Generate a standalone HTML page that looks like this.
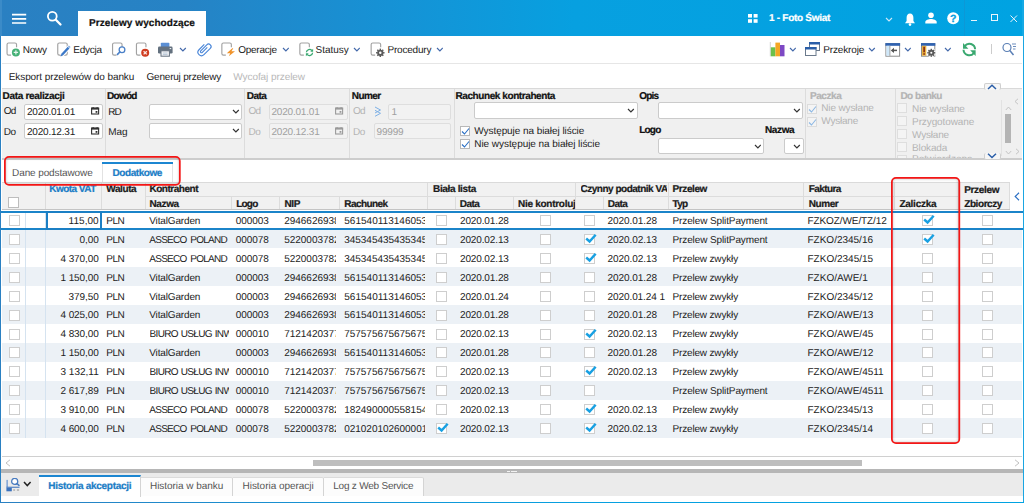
<!DOCTYPE html>
<html><head><meta charset="utf-8"><style>
*{box-sizing:border-box;margin:0;padding:0}
html,body{width:1024px;height:503px;overflow:hidden;background:#fff}
body{font-family:"Liberation Sans",sans-serif;font-size:10px;color:#222;position:relative;text-rendering:geometricPrecision}
.a{position:absolute}
.t{position:absolute;white-space:nowrap;line-height:12px}

</style></head><body>
<div class="a" style="left:0px;top:0px;width:1024px;height:36px;background:linear-gradient(90deg,#2a80c2 0%,#2683c5 18%,#1692d5 38%,#07a0e0 56%,#00a3e2 100%);"></div>
<div class="a" style="left:0px;top:0px;width:2px;height:36px;background:#3b8bc8;"></div>
<div class="a" style="left:1022px;top:0px;width:2px;height:36px;background:#14a9e4;"></div>
<div class="a" style="left:78px;top:11px;width:128px;height:25px;background:#fff;"></div>
<div class="t" style="left:89.00px;top:18px;font-size:10px;color:#111;letter-spacing:0.079px;font-weight:bold;-webkit-text-stroke:0.22px;">Przelewy wychodzące</div>
<svg class="a" style="left:11px;top:13px" width="17" height="12" viewBox="0 0 17 12"><path d="M1 1.7H15.2M1 5.8H15.2M1 10H15.2" stroke="#fff" stroke-width="1.7"/></svg>
<svg class="a" style="left:45.9px;top:9.9px" width="17" height="17" viewBox="0 0 17 17"><circle cx="6.3" cy="6.3" r="4.4" fill="none" stroke="#fff" stroke-width="1.8"/><path d="M9.8 9.8L14.5 14.5" stroke="#fff" stroke-width="2.3" stroke-linecap="round"/></svg>
<svg class="a" style="left:747.5px;top:14px" width="10" height="9" viewBox="0 0 10 9"><rect x="0" y="0" width="4" height="3.6" fill="#fff"/><rect x="5.6" y="0" width="4" height="3.6" fill="#fff"/><rect x="0" y="5.2" width="4" height="3.6" fill="#fff"/><rect x="5.6" y="5.2" width="4" height="3.6" fill="#fff"/></svg>
<div class="t" style="left:769.00px;top:13px;font-size:10px;color:#fff;letter-spacing:-0.286px;font-weight:bold;-webkit-text-stroke:0.22px;">1 - Foto Świat</div>
<svg class="a" style="left:885px;top:16.5px" width="8" height="5" viewBox="0 0 8 5"><path d="M1 1L4.0 4L7 1" fill="none" stroke="#cfe8f8" stroke-width="1.1"/></svg>
<svg class="a" style="left:904px;top:13px" width="12" height="14" viewBox="0 0 12 14"><path d="M6 0.5C3.8 0.5 2.6 2.4 2.6 4.8V8L1 10.2H11L9.4 8V4.8C9.4 2.4 8.2 0.5 6 0.5Z" fill="#fff"/><circle cx="6" cy="11.6" r="1.3" fill="#fff"/></svg>
<svg class="a" style="left:925px;top:12px" width="12" height="12" viewBox="0 0 12 12"><circle cx="6" cy="3.2" r="2.8" fill="#fff"/><path d="M0.3 11.6V10C0.3 8 3.6 7 6 7S11.7 8 11.7 10V11.6Z" fill="#fff"/></svg>
<svg class="a" style="left:946.5px;top:12.3px" width="12.5" height="12.5" viewBox="0 0 12.5 12.5"><circle cx="6.2" cy="6.2" r="6" fill="#fff"/><text x="6.2" y="10" font-family="Liberation Sans" font-weight="bold" font-size="10.5" text-anchor="middle" fill="#069fe0" stroke="#069fe0" stroke-width="0.3">?</text></svg>
<div class="a" style="left:964px;top:0px;width:1px;height:36px;background:#0c98d6;"></div>
<div class="a" style="left:971px;top:20px;width:6px;height:1px;background:#e8f4fc;"></div>
<div class="a" style="left:991px;top:14px;width:7px;height:7px;border:1px solid #e8f4fc;"></div>
<svg class="a" style="left:1010px;top:15px" width="8" height="8" viewBox="0 0 8 8"><path d="M0.5 0.5L7 7M7 0.5L0.5 7" stroke="#e8f4fc" stroke-width="1"/></svg>
<div class="a" style="left:2px;top:63px;width:1020px;height:1px;background:#e6e6e6;"></div>
<div class="t" style="left:22.75px;top:45px;font-size:10px;color:#222;letter-spacing:-0.254px;">Nowy</div>
<div class="t" style="left:73.25px;top:45px;font-size:10px;color:#222;letter-spacing:-0.253px;">Edycja</div>
<div class="t" style="left:238.25px;top:45px;font-size:10px;color:#222;letter-spacing:-0.26px;">Operacje</div>
<div class="t" style="left:315.50px;top:45px;font-size:10px;color:#222;letter-spacing:-0.016px;">Statusy</div>
<div class="t" style="left:387.50px;top:45px;font-size:10px;color:#222;letter-spacing:-0.203px;">Procedury</div>
<div class="t" style="left:823.20px;top:45px;font-size:10px;color:#222;letter-spacing:-0.139px;">Przekroje</div>
<svg class="a" style="left:179px;top:46.6px" width="7.8" height="5" viewBox="0 0 7.8 5"><path d="M1 1L3.9 4L6.8 1" fill="none" stroke="#4268aa" stroke-width="1.15"/></svg>
<svg class="a" style="left:281.5px;top:46.6px" width="7.8" height="5" viewBox="0 0 7.8 5"><path d="M1 1L3.9 4L6.8 1" fill="none" stroke="#4268aa" stroke-width="1.15"/></svg>
<svg class="a" style="left:352.5px;top:46.6px" width="7.8" height="5" viewBox="0 0 7.8 5"><path d="M1 1L3.9 4L6.8 1" fill="none" stroke="#4268aa" stroke-width="1.15"/></svg>
<svg class="a" style="left:435.5px;top:46.6px" width="7.8" height="5" viewBox="0 0 7.8 5"><path d="M1 1L3.9 4L6.8 1" fill="none" stroke="#4268aa" stroke-width="1.15"/></svg>
<svg class="a" style="left:788.5px;top:46.6px" width="7.8" height="5" viewBox="0 0 7.8 5"><path d="M1 1L3.9 4L6.8 1" fill="none" stroke="#4268aa" stroke-width="1.15"/></svg>
<svg class="a" style="left:868px;top:46.6px" width="7.8" height="5" viewBox="0 0 7.8 5"><path d="M1 1L3.9 4L6.8 1" fill="none" stroke="#4268aa" stroke-width="1.15"/></svg>
<svg class="a" style="left:903.5px;top:46.6px" width="7.8" height="5" viewBox="0 0 7.8 5"><path d="M1 1L3.9 4L6.8 1" fill="none" stroke="#4268aa" stroke-width="1.15"/></svg>
<svg class="a" style="left:943.5px;top:46.6px" width="7.8" height="5" viewBox="0 0 7.8 5"><path d="M1 1L3.9 4L6.8 1" fill="none" stroke="#4268aa" stroke-width="1.15"/></svg>
<svg class="a" style="left:0px;top:36px" width="1024" height="28" viewBox="0 0 1024 28"><path d="M16.55 11.15V8.55Q16.55 6.95 14.950000000000001 6.95H8.65Q7.05 6.95 7.05 8.55V17.55Q7.05 19.150000000000002 8.65 19.150000000000002H11.05" fill="none" stroke="#a2a2a2" stroke-width="1.15"/><circle cx="15.9" cy="16.4" r="4" fill="#45b176"/><path d="M13.7 16.4H18.1M15.9 14.2V18.600" stroke="#e8f6ee" stroke-width="1.2"/><rect x="57.75" y="6.95" width="9.5" height="12.200000000000003" rx="1.6" fill="none" stroke="#a2a2a2" stroke-width="1.15"/><path d="M61.500 19.400L69.300 10.900" stroke="#fff" stroke-width="4.2"/><path d="M62 18.800L68.600 11.600" stroke="#3b78c8" stroke-width="2.3" stroke-linecap="butt"/><path d="M60.500 20.400L61.300 17.800L62.900 19.400Z" fill="#3b78c8"/><path d="M68.900 11.200L69.700 10.300" stroke="#7aa6de" stroke-width="2.3"/><path d="M122.05 11.15V8.55Q122.05 6.95 120.45 6.95H114.14999999999999Q112.55 6.95 112.55 8.55V17.55Q112.55 19.150000000000002 114.14999999999999 19.150000000000002H116.55" fill="none" stroke="#a2a2a2" stroke-width="1.15"/><circle cx="122" cy="13.800" r="2.850" fill="#fff" stroke="#4a80c8" stroke-width="1.3"/><path d="M119.800 16L117.500 18.300" stroke="#4a80c8" stroke-width="1.7" stroke-linecap="round"/><path d="M145.95 11.15V8.55Q145.95 6.95 144.35 6.95H138.05Q136.45000000000002 6.95 136.45000000000002 8.55V17.55Q136.45000000000002 19.150000000000002 138.05 19.150000000000002H140.45000000000002" fill="none" stroke="#a2a2a2" stroke-width="1.15"/><circle cx="145.200" cy="16.800" r="4" fill="#cf3c20"/><path d="M143.600 15.200L146.800 18.400M146.800 15.200L143.600 18.400" stroke="#fbe9e4" stroke-width="1.3"/><rect x="160.800" y="6.800" width="8.600" height="5" rx="0.8" fill="#5b8fd4"/><rect x="158" y="10.600" width="14.600" height="7" rx="1.3" fill="#64717f"/><rect x="161" y="14.800" width="8.400" height="5.400" fill="#f4f6f8" stroke="#64717f" stroke-width="1"/><path d="M162.800 17H167.600M162.800 18.600H167.600" stroke="#9fb2c8" stroke-width="0.7"/><rect x="169.700" y="12" width="1.500" height="1.100" fill="#e8edf2"/><g transform="translate(204.3,13.4) rotate(45) translate(-4.5,-8.5)"><path d="M1 5V12.500a3.500 3.500 0 0 0 7 0V3.500a2.500 2.500 0 0 0 -5 0V12a1.100 1.100 0 0 0 2.200 0V5" fill="none" stroke="#4a86d8" stroke-width="1.15"/></g><path d="M231.35 11.15V8.55Q231.35 6.95 229.75 6.95H223.45000000000002Q221.85000000000002 6.95 221.85000000000002 8.55V17.55Q221.85000000000002 19.150000000000002 223.45000000000002 19.150000000000002H225.85000000000002" fill="none" stroke="#a2a2a2" stroke-width="1.15"/><path d="M232.300 12.300L226.800 17.200H230.200L228.800 20.300L235 15.200H231.500L233.300 12.300Z" fill="#f0932b"/><path d="M309.35 11.15V8.55Q309.35 6.95 307.75 6.95H301.45000000000005Q299.85 6.95 299.85 8.55V17.55Q299.85 19.150000000000002 301.45000000000005 19.150000000000002H303.85" fill="none" stroke="#a2a2a2" stroke-width="1.15"/><g transform="rotate(0 309.5 16.5)"><path d="M306.4 16.2A3.1 3.1 0 0 1 311.92 14.58" fill="none" stroke="#3aa870" stroke-width="1.3"/><path d="M313.10 12.80V15.80H310.30Z" fill="#3aa870"/></g><g transform="rotate(180 309.5 16.5)"><path d="M306.4 16.2A3.1 3.1 0 0 1 311.92 14.58" fill="none" stroke="#3aa870" stroke-width="1.3"/><path d="M313.10 12.80V15.80H310.30Z" fill="#3aa870"/></g><path d="M380.65000000000003 11.15V8.55Q380.65000000000003 6.95 379.05 6.95H372.75000000000006Q371.15000000000003 6.95 371.15000000000003 8.55V17.55Q371.15000000000003 19.150000000000002 372.75000000000006 19.150000000000002H375.15000000000003" fill="none" stroke="#a2a2a2" stroke-width="1.15"/><circle cx="380.3" cy="16.8" r="2.2" fill="none" stroke="#5a5a5a" stroke-width="1.9"/><path d="M383.10 16.80L384.50 16.80" stroke="#5a5a5a" stroke-width="1.5"/><path d="M382.28 18.78L383.27 19.77" stroke="#5a5a5a" stroke-width="1.5"/><path d="M380.30 19.60L380.30 21.00" stroke="#5a5a5a" stroke-width="1.5"/><path d="M378.32 18.78L377.33 19.77" stroke="#5a5a5a" stroke-width="1.5"/><path d="M377.50 16.80L376.10 16.80" stroke="#5a5a5a" stroke-width="1.5"/><path d="M378.32 14.82L377.33 13.83" stroke="#5a5a5a" stroke-width="1.5"/><path d="M380.30 14.00L380.30 12.60" stroke="#5a5a5a" stroke-width="1.5"/><path d="M382.28 14.82L383.27 13.83" stroke="#5a5a5a" stroke-width="1.5"/><path d="M770.300 6V20.300" fill="none" stroke="#c8c8c8" stroke-width="0.8"/><rect x="770.800" y="11.300" width="4.600" height="9" fill="#6cc04a"/><rect x="775.400" y="6.600" width="4.600" height="13.700" fill="#f5a623"/><rect x="780" y="9" width="4.500" height="11.300" fill="#7d48c4"/><rect x="809.5" y="6.5" width="10" height="8" fill="#fff" stroke="#6b7a8c" stroke-width="1"/><rect x="809" y="6" width="11" height="2.5" fill="#2a5ea8"/><rect x="805.5" y="11.500" width="10.5" height="8" fill="#fff" stroke="#6b7a8c" stroke-width="1"/><rect x="805" y="11" width="11.5" height="2.5" fill="#2a5ea8"/><rect x="885.900" y="7.600" width="13.700" height="12.600" fill="#fff" stroke="#8c8c8c" stroke-width="1"/><rect x="885.400" y="7.100" width="14.700" height="2.700" fill="#2f62b0"/><rect x="886.400" y="9.800" width="3.300" height="9.900" fill="#cfe8fa"/><path d="M889.900 9.800V19.800" stroke="#8c8c8c" stroke-width="0.8"/><path d="M897 14.400H892" stroke="#555" stroke-width="1.5"/><path d="M890.800 14.400L894 11.800V17Z" fill="#555"/><rect x="921.500" y="7.600" width="13.300" height="12.600" fill="#fff" stroke="#8c8c8c" stroke-width="1"/><rect x="921" y="7.100" width="14.300" height="2.700" fill="#2f62b0"/><rect x="922" y="9.800" width="4.300" height="9.900" fill="#e9b13f"/><path d="M924.100 10.800V16.200M924.100 17.300V18.800" stroke="#7a1f12" stroke-width="1.500"/><circle cx="931.300" cy="16.800" r="4.600" fill="#fff"/><circle cx="931.3" cy="16.8" r="2.0" fill="none" stroke="#5a5a5a" stroke-width="1.9"/><path d="M933.90 16.80L935.30 16.80" stroke="#5a5a5a" stroke-width="1.5"/><path d="M933.14 18.64L934.13 19.63" stroke="#5a5a5a" stroke-width="1.5"/><path d="M931.30 19.40L931.30 20.80" stroke="#5a5a5a" stroke-width="1.5"/><path d="M929.46 18.64L928.47 19.63" stroke="#5a5a5a" stroke-width="1.5"/><path d="M928.70 16.80L927.30 16.80" stroke="#5a5a5a" stroke-width="1.5"/><path d="M929.46 14.96L928.47 13.97" stroke="#5a5a5a" stroke-width="1.5"/><path d="M931.30 14.20L931.30 12.80" stroke="#5a5a5a" stroke-width="1.5"/><path d="M933.14 14.96L934.13 13.97" stroke="#5a5a5a" stroke-width="1.5"/><g transform="translate(1938.600 0) scale(-1 1)"><g transform="rotate(0 969.3 13.5)"><path d="M963.5 13.2A5.8 5.8 0 0 1 973.82 9.90" fill="none" stroke="#3aa870" stroke-width="2"/><path d="M975.60 7.10V12.70H970.20Z" fill="#3aa870"/></g><g transform="rotate(180 969.3 13.5)"><path d="M963.5 13.2A5.8 5.8 0 0 1 973.82 9.90" fill="none" stroke="#3aa870" stroke-width="2"/><path d="M975.60 7.10V12.70H970.20Z" fill="#3aa870"/></g></g><path d="M991.5 8V18" stroke="#ccc" stroke-width="1"/><circle cx="1007" cy="11.500" r="4" fill="none" stroke="#5a7fb5" stroke-width="1.2"/><path d="M1009.800 14.500L1013.500 19" stroke="#5a7fb5" stroke-width="1.5"/><path d="M1012 8H1016M1013 10.500H1016M1013 13H1015.5" stroke="#5a7fb5" stroke-width="0.9"/></svg>
<div class="t" style="left:8.75px;top:72px;font-size:10px;color:#222;letter-spacing:-0.091px;">Eksport przelewów do banku</div>
<div class="t" style="left:146.50px;top:72px;font-size:10px;color:#222;letter-spacing:-0.207px;">Generuj przelewy</div>
<div class="t" style="left:233.25px;top:72px;font-size:10px;color:#b8b8b8;letter-spacing:-0.065px;">Wycofaj przelew</div>
<div class="a" style="left:2px;top:88px;width:1020px;height:72px;background:#f0f0f0;border-top:1px solid #d9d9d9;border-bottom:2px solid #cdcdcd;"></div>
<div class="a" style="left:105px;top:89px;width:1px;height:69px;background:#dcdcdc;"></div>
<div class="a" style="left:243.5px;top:89px;width:1px;height:69px;background:#dcdcdc;"></div>
<div class="a" style="left:349px;top:89px;width:1px;height:69px;background:#dcdcdc;"></div>
<div class="a" style="left:453.5px;top:89px;width:1px;height:69px;background:#dcdcdc;"></div>
<div class="a" style="left:805px;top:89px;width:1px;height:69px;background:#dcdcdc;"></div>
<div class="a" style="left:895px;top:89px;width:1px;height:69px;background:#dcdcdc;"></div>
<div class="t" style="left:2.50px;top:91px;font-size:10px;color:#111;letter-spacing:-0.315px;font-weight:bold;-webkit-text-stroke:0.22px;">Data realizacji</div>
<div class="t" style="left:107.00px;top:91px;font-size:10px;color:#111;letter-spacing:-0.716px;font-weight:bold;-webkit-text-stroke:0.22px;">Dowód</div>
<div class="t" style="left:246.75px;top:91px;font-size:10px;color:#111;letter-spacing:-0.547px;font-weight:bold;-webkit-text-stroke:0.22px;">Data</div>
<div class="t" style="left:351.75px;top:91px;font-size:10px;color:#111;letter-spacing:-0.588px;font-weight:bold;-webkit-text-stroke:0.22px;">Numer</div>
<div class="t" style="left:455.50px;top:91px;font-size:10px;color:#111;letter-spacing:-0.416px;font-weight:bold;-webkit-text-stroke:0.22px;">Rachunek kontrahenta</div>
<div class="t" style="left:639.25px;top:91px;font-size:10px;color:#111;letter-spacing:-0.809px;font-weight:bold;-webkit-text-stroke:0.22px;">Opis</div>
<div class="t" style="left:810.00px;top:91px;font-size:10px;color:#b4b4b4;letter-spacing:-0.445px;font-weight:bold;-webkit-text-stroke:0.22px;">Paczka</div>
<div class="t" style="left:900.40px;top:91px;font-size:10px;color:#b4b4b4;letter-spacing:-0.495px;font-weight:bold;-webkit-text-stroke:0.22px;">Do banku</div>
<div class="t" style="left:3.75px;top:106px;font-size:10px;color:#222;letter-spacing:-0.797px;">Od</div>
<div class="t" style="left:3.75px;top:127px;font-size:10px;color:#222;letter-spacing:-0.523px;">Do</div>
<div class="a" style="left:24px;top:104px;width:78.5px;height:16px;background:#fff;border:1px solid #cbcbcb;border-radius:2px;"></div>
<div class="a" style="left:24px;top:123px;width:78.5px;height:16px;background:#fff;border:1px solid #cbcbcb;border-radius:2px;"></div>
<div class="t" style="left:27.00px;top:107px;font-size:10px;color:#222;letter-spacing:-0.206px;">2020.01.01</div>
<div class="t" style="left:27.00px;top:127px;font-size:10px;color:#222;letter-spacing:-0.206px;">2020.12.31</div>
<svg class="a" style="left:90.5px;top:107.3px" width="9" height="8" viewBox="0 0 9 8"><rect x="0.6" y="1.2" width="7" height="5.8" fill="none" stroke="#333" stroke-width="1.1"/><rect x="0.1" y="0.6" width="8" height="2" fill="#333"/><rect x="1.6" y="0" width="1" height="1.500" fill="#333"/><rect x="5.600" y="0" width="1" height="1.500" fill="#333"/><rect x="4.600" y="4" width="1.800" height="1.800" fill="#333"/></svg>
<svg class="a" style="left:90.5px;top:127.2px" width="9" height="8" viewBox="0 0 9 8"><rect x="0.6" y="1.2" width="7" height="5.8" fill="none" stroke="#333" stroke-width="1.1"/><rect x="0.1" y="0.6" width="8" height="2" fill="#333"/><rect x="1.6" y="0" width="1" height="1.500" fill="#333"/><rect x="5.600" y="0" width="1" height="1.500" fill="#333"/><rect x="4.600" y="4" width="1.800" height="1.800" fill="#333"/></svg>
<div class="t" style="left:108.25px;top:107px;font-size:10px;color:#222;letter-spacing:-0.977px;">RD</div>
<div class="t" style="left:108.25px;top:127px;font-size:10px;color:#222;letter-spacing:-0.068px;">Mag</div>
<div class="a" style="left:149px;top:104px;width:93px;height:16px;background:#fff;border:1px solid #cbcbcb;border-radius:2px;"></div>
<div class="a" style="left:149px;top:123px;width:93px;height:16px;background:#fff;border:1px solid #cbcbcb;border-radius:2px;"></div>
<svg class="a" style="left:232.2px;top:108.8px" width="7.8" height="5" viewBox="0 0 7.8 5"><path d="M1 1L3.9 4L6.8 1" fill="none" stroke="#333" stroke-width="1.15"/></svg>
<svg class="a" style="left:232.2px;top:128.3px" width="7.8" height="5" viewBox="0 0 7.8 5"><path d="M1 1L3.9 4L6.8 1" fill="none" stroke="#333" stroke-width="1.15"/></svg>
<div class="t" style="left:248.50px;top:106px;font-size:10px;color:#b4b4b4;letter-spacing:-0.797px;">Od</div>
<div class="t" style="left:248.50px;top:127px;font-size:10px;color:#b4b4b4;letter-spacing:-0.523px;">Do</div>
<div class="a" style="left:268.5px;top:104px;width:79px;height:16px;background:#f2f2f2;border:1px solid #dedede;border-radius:2px;"></div>
<div class="a" style="left:268.5px;top:123px;width:79px;height:16px;background:#f2f2f2;border:1px solid #dedede;border-radius:2px;"></div>
<div class="t" style="left:271.50px;top:107px;font-size:10px;color:#a0a0a0;letter-spacing:-0.206px;">2020.01.01</div>
<div class="t" style="left:271.50px;top:127px;font-size:10px;color:#a0a0a0;letter-spacing:-0.206px;">2020.12.31</div>
<svg class="a" style="left:335px;top:107.3px" width="9" height="8" viewBox="0 0 9 8"><rect x="0.6" y="1.2" width="7" height="5.8" fill="none" stroke="#9a9a9a" stroke-width="1.1"/><rect x="0.1" y="0.6" width="8" height="2" fill="#9a9a9a"/><rect x="1.6" y="0" width="1" height="1.500" fill="#9a9a9a"/><rect x="5.600" y="0" width="1" height="1.500" fill="#9a9a9a"/><rect x="4.600" y="4" width="1.800" height="1.800" fill="#9a9a9a"/></svg>
<svg class="a" style="left:335px;top:127.2px" width="9" height="8" viewBox="0 0 9 8"><rect x="0.6" y="1.2" width="7" height="5.8" fill="none" stroke="#9a9a9a" stroke-width="1.1"/><rect x="0.1" y="0.6" width="8" height="2" fill="#9a9a9a"/><rect x="1.6" y="0" width="1" height="1.500" fill="#9a9a9a"/><rect x="5.600" y="0" width="1" height="1.500" fill="#9a9a9a"/><rect x="4.600" y="4" width="1.800" height="1.800" fill="#9a9a9a"/></svg>
<div class="t" style="left:353.00px;top:106px;font-size:10px;color:#b4b4b4;letter-spacing:-0.797px;">Od</div>
<div class="t" style="left:353.00px;top:127px;font-size:10px;color:#b4b4b4;letter-spacing:-0.523px;">Do</div>
<svg class="a" style="left:374px;top:106px" width="8" height="11" viewBox="0 0 8 11"><path d="M1 1L6.5 4L1 7M1 4.3L6.5 7.300L1 10.3" fill="none" stroke="#7db0e6" stroke-width="1"/></svg>
<div class="a" style="left:387.5px;top:104px;width:63.5px;height:16px;background:#f2f2f2;border:1px solid #dedede;border-radius:2px;"></div>
<div class="a" style="left:373.5px;top:123px;width:77.5px;height:16px;background:#f2f2f2;border:1px solid #dedede;border-radius:2px;"></div>
<div class="t" style="left:391.50px;top:107px;font-size:10px;color:#a0a0a0;">1</div>
<div class="t" style="left:376.50px;top:127px;font-size:10px;color:#a0a0a0;letter-spacing:-0.163px;">99999</div>
<div class="a" style="left:474px;top:101.5px;width:163.5px;height:17px;background:#fff;border:1px solid #cbcbcb;border-radius:2px;"></div>
<svg class="a" style="left:627.3px;top:108.3px" width="7.8" height="5" viewBox="0 0 7.8 5"><path d="M1 1L3.9 4L6.8 1" fill="none" stroke="#333" stroke-width="1.15"/></svg>
<div class="a" style="left:658px;top:101.5px;width:144.5px;height:17px;background:#fff;border:1px solid #cbcbcb;border-radius:2px;"></div>
<svg class="a" style="left:793px;top:108.3px" width="7.8" height="5" viewBox="0 0 7.8 5"><path d="M1 1L3.9 4L6.8 1" fill="none" stroke="#333" stroke-width="1.15"/></svg>
<div class="a" style="left:658px;top:137.5px;width:105.5px;height:16px;background:#fff;border:1px solid #cbcbcb;border-radius:2px;"></div>
<svg class="a" style="left:753.5px;top:144px" width="7.8" height="5" viewBox="0 0 7.8 5"><path d="M1 1L3.9 4L6.8 1" fill="none" stroke="#333" stroke-width="1.15"/></svg>
<div class="a" style="left:783.5px;top:137.5px;width:20px;height:16px;background:#fff;border:1px solid #cbcbcb;border-radius:2px;"></div>
<svg class="a" style="left:793px;top:144px" width="7.8" height="5" viewBox="0 0 7.8 5"><path d="M1 1L3.9 4L6.8 1" fill="none" stroke="#333" stroke-width="1.15"/></svg>
<div class="t" style="left:639.25px;top:125px;font-size:10px;color:#111;letter-spacing:-0.797px;font-weight:bold;-webkit-text-stroke:0.22px;">Logo</div>
<div class="t" style="left:765.00px;top:125px;font-size:10px;color:#111;letter-spacing:-0.375px;font-weight:bold;-webkit-text-stroke:0.22px;">Nazwa</div>
<div class="a" style="left:459.5px;top:126.3px;width:10px;height:10px;background:#fff;border:1px solid #b8b8b8;"></div>
<svg class="a" style="left:459.5px;top:126.3px" width="10" height="10" viewBox="0 0 10 10"><path d="M2 5.5L4.5 8L9 2.5" fill="none" stroke="#2a6fc4" stroke-width="1.1"/></svg>
<div class="a" style="left:459.5px;top:139.3px;width:10px;height:10px;background:#fff;border:1px solid #b8b8b8;"></div>
<svg class="a" style="left:459.5px;top:139.3px" width="10" height="10" viewBox="0 0 10 10"><path d="M2 5.5L4.5 8L9 2.5" fill="none" stroke="#2a6fc4" stroke-width="1.1"/></svg>
<div class="t" style="left:474.25px;top:126px;font-size:10px;color:#222;letter-spacing:-0.063px;">Występuje na białej liście</div>
<div class="t" style="left:474.25px;top:139px;font-size:10px;color:#222;letter-spacing:-0.052px;">Nie występuje na białej liście</div>
<div class="a" style="left:806.75px;top:103.7px;width:10px;height:10px;background:#f4f4f4;border:1px solid #dcdcdc;"></div>
<svg class="a" style="left:806.75px;top:103.7px" width="10" height="10" viewBox="0 0 10 10"><path d="M2 5.5L4.5 8L9 2.5" fill="none" stroke="#8db8e4" stroke-width="1.1"/></svg>
<div class="a" style="left:806.75px;top:116.7px;width:10px;height:10px;background:#f4f4f4;border:1px solid #dcdcdc;"></div>
<svg class="a" style="left:806.75px;top:116.7px" width="10" height="10" viewBox="0 0 10 10"><path d="M2 5.5L4.5 8L9 2.5" fill="none" stroke="#8db8e4" stroke-width="1.1"/></svg>
<div class="t" style="left:821.25px;top:103px;font-size:10px;color:#b4b4b4;letter-spacing:-0.129px;">Nie wysłane</div>
<div class="t" style="left:821.25px;top:116px;font-size:10px;color:#b4b4b4;letter-spacing:-0.217px;">Wysłane</div>
<div class="a" style="left:897.4px;top:103.4px;width:10px;height:10px;background:#f4f4f4;border:1px solid #dedede;"></div>
<div class="t" style="left:912.10px;top:104px;font-size:10px;color:#b4b4b4;letter-spacing:-0.111px;">Nie wysłane</div>
<div class="a" style="left:897.4px;top:116.4px;width:10px;height:10px;background:#f4f4f4;border:1px solid #dedede;"></div>
<div class="t" style="left:912.10px;top:117px;font-size:10px;color:#b4b4b4;letter-spacing:-0.115px;">Przygotowane</div>
<div class="a" style="left:897.4px;top:129.4px;width:10px;height:10px;background:#f4f4f4;border:1px solid #dedede;"></div>
<div class="t" style="left:912.10px;top:130px;font-size:10px;color:#b4b4b4;letter-spacing:-0.217px;">Wysłane</div>
<div class="a" style="left:897.4px;top:142.4px;width:10px;height:10px;background:#f4f4f4;border:1px solid #dedede;"></div>
<div class="t" style="left:912.10px;top:143px;font-size:10px;color:#b4b4b4;letter-spacing:-0.163px;">Blokada</div>
<div class="a" style="left:895px;top:150px;width:106px;height:8px;overflow:hidden">
<div class="a" style="left:2.4px;top:5.4px;width:10px;height:10px;border:1px solid #dedede;background:#f4f4f4"></div>
<div class="t" style="left:17px;top:4.2px;color:#b4b4b4;font-size:10px">Potwierdzone</div>
</div>
<div class="a" style="left:1001px;top:100px;width:1px;height:56px;background:#e2e2e2;"></div>
<div class="a" style="left:983.5px;top:82.5px;width:17px;height:7px;background:#f6f6f6;border:1px solid #cfcfcf;border-radius:2px;border-bottom:none;"></div>
<svg class="a" style="left:987.5px;top:83.5px" width="9" height="-1.5" viewBox="0 0 9 -1.5"><path d="M1 1L4.5 -2.5L8 1" fill="none" stroke="#2a5ea8" stroke-width="1.5"/></svg>
<div class="a" style="left:983.5px;top:152.5px;width:17px;height:7px;background:#f6f6f6;border:1px solid #cfcfcf;border-radius:2px;border-top:none;"></div>
<svg class="a" style="left:987px;top:153px" width="10" height="6" viewBox="0 0 10 6"><path d="M1 0.8L5 4.5L9 0.8" fill="none" stroke="#2a5ea8" stroke-width="1.5"/></svg>
<svg class="a" style="left:987px;top:83.5px" width="10" height="6" viewBox="0 0 10 6"><path d="M1 5L5 1.3L9 5" fill="none" stroke="#2a5ea8" stroke-width="1.5"/></svg>
<div class="a" style="left:1005px;top:114px;width:5.5px;height:28.5px;background:#b4b4b4;"></div>
<svg class="a" style="left:1004.5px;top:105.5px" width="7" height="5" viewBox="0 0 7 5"><path d="M0.8 4L3.5 1L6.2 4" fill="none" stroke="#c4c4c4" stroke-width="1"/></svg>
<svg class="a" style="left:1004.5px;top:149.5px" width="7" height="5" viewBox="0 0 7 5"><path d="M0.8 1L3.5 4L6.2 1" fill="none" stroke="#c4c4c4" stroke-width="1"/></svg>
<svg class="a" style="left:1013.5px;top:97.5px" width="5" height="7" viewBox="0 0 5 7"><path d="M4 0.8L1 3.5L4 6.2" fill="none" stroke="#c4c4c4" stroke-width="1"/></svg>
<svg class="a" style="left:1014.5px;top:147.5px" width="5" height="7" viewBox="0 0 5 7"><path d="M1 0.8L4 3.5L1 6.2" fill="none" stroke="#c4c4c4" stroke-width="1"/></svg>
<div class="t" style="left:12.10px;top:168px;font-size:10px;color:#555;letter-spacing:-0.119px;">Dane podstawowe</div>
<div class="a" style="left:101.5px;top:162px;width:71px;height:2px;background:#1c86d1;"></div>
<div class="a" style="left:101.5px;top:164px;width:1px;height:19px;background:#e2e2e2;"></div>
<div class="a" style="left:171.5px;top:164px;width:1px;height:19px;background:#e2e2e2;"></div>
<div class="t" style="left:112.50px;top:168px;font-size:10px;color:#1b7dc6;letter-spacing:-0.427px;font-weight:bold;-webkit-text-stroke:0.22px;">Dodatkowe</div>
<div class="a" style="left:2px;top:182px;width:1008px;height:28px;background:#f1f1f1;border-top:1px solid #dadada;border-bottom:1px solid #c4c4c4;"></div>
<div class="a" style="left:45.0px;top:183px;width:1px;height:26px;background:#dcdcdc;"></div>
<div class="a" style="left:101.0px;top:183px;width:1px;height:26px;background:#dcdcdc;"></div>
<div class="a" style="left:145.0px;top:183px;width:1px;height:26px;background:#dcdcdc;"></div>
<div class="a" style="left:231.0px;top:196px;width:1px;height:13px;background:#dcdcdc;"></div>
<div class="a" style="left:279.0px;top:196px;width:1px;height:13px;background:#dcdcdc;"></div>
<div class="a" style="left:339.0px;top:196px;width:1px;height:13px;background:#dcdcdc;"></div>
<div class="a" style="left:427.0px;top:183px;width:1px;height:26px;background:#dcdcdc;"></div>
<div class="a" style="left:455.0px;top:196px;width:1px;height:13px;background:#dcdcdc;"></div>
<div class="a" style="left:513.0px;top:196px;width:1px;height:13px;background:#dcdcdc;"></div>
<div class="a" style="left:575.0px;top:183px;width:1px;height:26px;background:#dcdcdc;"></div>
<div class="a" style="left:602.5px;top:196px;width:1px;height:13px;background:#dcdcdc;"></div>
<div class="a" style="left:667.5px;top:183px;width:1px;height:26px;background:#dcdcdc;"></div>
<div class="a" style="left:803.0px;top:183px;width:1px;height:26px;background:#dcdcdc;"></div>
<div class="a" style="left:894.0px;top:183px;width:1px;height:26px;background:#dcdcdc;"></div>
<div class="a" style="left:958.0px;top:183px;width:1px;height:26px;background:#dcdcdc;"></div>
<div class="a" style="left:1009.0px;top:183px;width:1px;height:26px;background:#dcdcdc;"></div>
<div class="a" style="left:146px;top:195.5px;width:812.5px;height:1px;background:#dcdcdc;"></div>
<div class="t" style="left:49.25px;top:184px;font-size:10px;color:#1b7dc6;letter-spacing:-0.533px;font-weight:bold;-webkit-text-stroke:0.22px;">Kwota VAT</div>
<div class="t" style="left:106.25px;top:184px;font-size:10px;color:#1a1a1a;letter-spacing:-0.404px;font-weight:bold;-webkit-text-stroke:0.22px;">Waluta</div>
<div class="t" style="left:149.50px;top:184px;font-size:10px;color:#1a1a1a;letter-spacing:-0.484px;font-weight:bold;-webkit-text-stroke:0.22px;">Kontrahent</div>
<div class="t" style="left:149.50px;top:199px;font-size:10px;color:#1a1a1a;letter-spacing:-0.375px;font-weight:bold;-webkit-text-stroke:0.22px;">Nazwa</div>
<div class="t" style="left:236.25px;top:199px;font-size:10px;color:#1a1a1a;letter-spacing:-0.797px;font-weight:bold;-webkit-text-stroke:0.22px;">Logo</div>
<div class="t" style="left:284.50px;top:199px;font-size:10px;color:#1a1a1a;letter-spacing:-0.391px;font-weight:bold;-webkit-text-stroke:0.22px;">NIP</div>
<div class="t" style="left:344.25px;top:199px;font-size:10px;color:#1a1a1a;letter-spacing:-0.568px;font-weight:bold;-webkit-text-stroke:0.22px;">Rachunek</div>
<div class="t" style="left:433.00px;top:184px;font-size:10px;color:#1a1a1a;letter-spacing:-0.337px;font-weight:bold;-webkit-text-stroke:0.22px;">Biała lista</div>
<div class="t" style="left:459.75px;top:199px;font-size:10px;color:#1a1a1a;letter-spacing:-0.547px;font-weight:bold;-webkit-text-stroke:0.22px;">Data</div>
<div class="t" style="left:518.00px;top:199px;font-size:10px;color:#1a1a1a;letter-spacing:-0.279px;font-weight:bold;-webkit-text-stroke:0.22px;width:57.00px;overflow:hidden;">Nie kontroluj</div>
<div class="t" style="left:580.50px;top:184px;font-size:10px;color:#1a1a1a;letter-spacing:-0.49px;font-weight:bold;-webkit-text-stroke:0.22px;width:86.50px;overflow:hidden;">Czynny podatnik VAT</div>
<div class="t" style="left:607.75px;top:199px;font-size:10px;color:#1a1a1a;letter-spacing:-0.547px;font-weight:bold;-webkit-text-stroke:0.22px;">Data</div>
<div class="t" style="left:672.50px;top:184px;font-size:10px;color:#1a1a1a;letter-spacing:-0.393px;font-weight:bold;-webkit-text-stroke:0.22px;">Przelew</div>
<div class="t" style="left:672.50px;top:199px;font-size:10px;color:#1a1a1a;letter-spacing:-0.682px;font-weight:bold;-webkit-text-stroke:0.22px;">Typ</div>
<div class="t" style="left:808.75px;top:184px;font-size:10px;color:#1a1a1a;letter-spacing:-0.589px;font-weight:bold;-webkit-text-stroke:0.22px;">Faktura</div>
<div class="t" style="left:808.75px;top:199px;font-size:10px;color:#1a1a1a;letter-spacing:-0.438px;font-weight:bold;-webkit-text-stroke:0.22px;">Numer</div>
<div class="t" style="left:899.40px;top:199px;font-size:10px;color:#1a1a1a;letter-spacing:-0.24px;font-weight:bold;-webkit-text-stroke:0.22px;">Zaliczka</div>
<div class="t" style="left:964.20px;top:185px;font-size:10px;color:#1a1a1a;letter-spacing:-0.336px;font-weight:bold;-webkit-text-stroke:0.22px;">Przelew</div>
<div class="t" style="left:964.20px;top:199px;font-size:10px;color:#1a1a1a;letter-spacing:-0.416px;font-weight:bold;-webkit-text-stroke:0.22px;">Zbiorczy</div>
<div class="a" style="left:8.25px;top:197px;width:11px;height:11px;background:#fff;border:1px solid #bdbdbd;"></div>
<svg class="a" style="left:1013.5px;top:192px" width="6" height="9" viewBox="0 0 6 9"><path d="M5 0.8L1.2 4.500L5 8.200" fill="none" stroke="#2a6fc4" stroke-width="1.2"/></svg>
<div class="t" style="left:68.50px;top:216px;font-size:10px;color:#222;letter-spacing:0.068px;">115,00</div>
<div class="t" style="left:106.25px;top:216px;font-size:10px;color:#222;letter-spacing:-0.484px;">PLN</div>
<div class="t" style="left:149.25px;top:216px;font-size:10px;color:#222;letter-spacing:-0.149px;">VitalGarden</div>
<div class="t" style="left:235.75px;top:216px;font-size:10px;color:#222;letter-spacing:-0.062px;">000003</div>
<div class="t" style="left:284.25px;top:216px;font-size:10px;color:#222;letter-spacing:-0.032px;width:51.75px;overflow:hidden;">2946626938</div>
<div class="t" style="left:344.25px;top:216px;font-size:10px;color:#222;letter-spacing:0.018px;width:80.75px;overflow:hidden;">561540113146053</div>
<div class="a" style="left:436.2px;top:215.4px;width:11px;height:11px;background:#fff;border:1px solid #cecece;"></div>
<div class="t" style="left:460.00px;top:216px;font-size:10px;color:#222;letter-spacing:-0.131px;">2020.01.28</div>
<div class="a" style="left:539.5px;top:215.4px;width:11px;height:11px;background:#fff;border:1px solid #cecece;"></div>
<div class="a" style="left:584px;top:215.4px;width:11px;height:11px;background:#fff;border:1px solid #cecece;"></div>
<div class="t" style="left:607.50px;top:216px;font-size:10px;color:#222;letter-spacing:-0.062px;">2020.01.28</div>
<div class="t" style="left:672.50px;top:216px;font-size:10px;color:#222;letter-spacing:-0.113px;">Przelew SplitPayment</div>
<div class="t" style="left:807.50px;top:216px;font-size:10px;color:#222;letter-spacing:-0.094px;">FZKOZ/WE/TZ/12</div>
<div class="a" style="left:922.3px;top:215.4px;width:11px;height:11px;background:#fff;border:1px solid #cecece;"></div>
<svg class="a" style="left:922.3px;top:213.4px" width="14" height="13" viewBox="0 0 14 13"><path d="M2.2 6.5L5.6 9.5L11.7 2.7" fill="none" stroke="#18a0e2" stroke-width="2.4"/></svg>
<div class="a" style="left:982.4px;top:215.4px;width:11px;height:11px;background:#fff;border:1px solid #cecece;"></div>
<div class="a" style="left:8.8px;top:215.4px;width:11px;height:11px;background:#fff;border:1px solid #cecece;"></div>
<div class="a" style="left:2px;top:230px;width:1020px;height:18px;background:#ecf1f6;"></div>
<div class="t" style="left:79.56px;top:235px;font-size:10px;color:#222;letter-spacing:-0.07px;">0,00</div>
<div class="t" style="left:106.25px;top:235px;font-size:10px;color:#222;letter-spacing:-0.484px;">PLN</div>
<div class="t" style="left:149.25px;top:235px;font-size:10px;color:#222;letter-spacing:-0.726px;word-spacing:1.6px;">ASSECO POLAND</div>
<div class="t" style="left:235.75px;top:235px;font-size:10px;color:#222;letter-spacing:-0.062px;">000078</div>
<div class="t" style="left:284.25px;top:235px;font-size:10px;color:#222;letter-spacing:-0.032px;width:51.75px;overflow:hidden;">5220003782</div>
<div class="t" style="left:344.25px;top:235px;font-size:10px;color:#222;letter-spacing:-0.032px;width:80.75px;overflow:hidden;">345345435435345</div>
<div class="a" style="left:436.2px;top:234.27px;width:11px;height:11px;background:#fff;border:1px solid #cecece;"></div>
<div class="t" style="left:460.00px;top:235px;font-size:10px;color:#222;letter-spacing:-0.131px;">2020.02.13</div>
<div class="a" style="left:539.5px;top:234.27px;width:11px;height:11px;background:#fff;border:1px solid #cecece;"></div>
<div class="a" style="left:584px;top:234.27px;width:11px;height:11px;background:#fff;border:1px solid #cecece;"></div>
<svg class="a" style="left:584px;top:232.27px" width="14" height="13" viewBox="0 0 14 13"><path d="M2.2 6.5L5.6 9.5L11.7 2.7" fill="none" stroke="#18a0e2" stroke-width="2.4"/></svg>
<div class="t" style="left:607.50px;top:235px;font-size:10px;color:#222;letter-spacing:-0.062px;">2020.02.13</div>
<div class="t" style="left:672.50px;top:235px;font-size:10px;color:#222;letter-spacing:-0.113px;">Przelew SplitPayment</div>
<div class="t" style="left:807.50px;top:235px;font-size:10px;color:#222;letter-spacing:-0.008px;">FZKO/2345/16</div>
<div class="a" style="left:922.3px;top:234.27px;width:11px;height:11px;background:#fff;border:1px solid #cecece;"></div>
<svg class="a" style="left:922.3px;top:232.27px" width="14" height="13" viewBox="0 0 14 13"><path d="M2.2 6.5L5.6 9.5L11.7 2.7" fill="none" stroke="#18a0e2" stroke-width="2.4"/></svg>
<div class="a" style="left:982.4px;top:234.27px;width:11px;height:11px;background:#fff;border:1px solid #cecece;"></div>
<div class="a" style="left:8.8px;top:234.27px;width:11px;height:11px;background:#fff;border:1px solid #cecece;"></div>
<div class="t" style="left:60.47px;top:254px;font-size:10px;color:#222;letter-spacing:-0.082px;">4 370,00</div>
<div class="t" style="left:106.25px;top:254px;font-size:10px;color:#222;letter-spacing:-0.484px;">PLN</div>
<div class="t" style="left:149.25px;top:254px;font-size:10px;color:#222;letter-spacing:-0.726px;word-spacing:1.6px;">ASSECO POLAND</div>
<div class="t" style="left:235.75px;top:254px;font-size:10px;color:#222;letter-spacing:-0.062px;">000078</div>
<div class="t" style="left:284.25px;top:254px;font-size:10px;color:#222;letter-spacing:-0.032px;width:51.75px;overflow:hidden;">5220003782</div>
<div class="t" style="left:344.25px;top:254px;font-size:10px;color:#222;letter-spacing:-0.032px;width:80.75px;overflow:hidden;">345345435435345</div>
<div class="a" style="left:436.2px;top:253.14000000000001px;width:11px;height:11px;background:#fff;border:1px solid #cecece;"></div>
<div class="t" style="left:460.00px;top:254px;font-size:10px;color:#222;letter-spacing:-0.131px;">2020.02.13</div>
<div class="a" style="left:539.5px;top:253.14000000000001px;width:11px;height:11px;background:#fff;border:1px solid #cecece;"></div>
<div class="a" style="left:584px;top:253.14000000000001px;width:11px;height:11px;background:#fff;border:1px solid #cecece;"></div>
<svg class="a" style="left:584px;top:251.14000000000001px" width="14" height="13" viewBox="0 0 14 13"><path d="M2.2 6.5L5.6 9.5L11.7 2.7" fill="none" stroke="#18a0e2" stroke-width="2.4"/></svg>
<div class="t" style="left:607.50px;top:254px;font-size:10px;color:#222;letter-spacing:-0.062px;">2020.02.13</div>
<div class="t" style="left:672.50px;top:254px;font-size:10px;color:#222;letter-spacing:-0.164px;">Przelew zwykły</div>
<div class="t" style="left:807.50px;top:254px;font-size:10px;color:#222;">FZKO/2345/15</div>
<div class="a" style="left:922.3px;top:253.14000000000001px;width:11px;height:11px;background:#fff;border:1px solid #cecece;"></div>
<div class="a" style="left:982.4px;top:253.14000000000001px;width:11px;height:11px;background:#fff;border:1px solid #cecece;"></div>
<div class="a" style="left:8.8px;top:253.14000000000001px;width:11px;height:11px;background:#fff;border:1px solid #cecece;"></div>
<div class="a" style="left:2px;top:267px;width:1020px;height:19px;background:#ecf1f6;"></div>
<div class="t" style="left:60.47px;top:273px;font-size:10px;color:#222;letter-spacing:-0.082px;">1 150,00</div>
<div class="t" style="left:106.25px;top:273px;font-size:10px;color:#222;letter-spacing:-0.484px;">PLN</div>
<div class="t" style="left:149.25px;top:273px;font-size:10px;color:#222;letter-spacing:-0.149px;">VitalGarden</div>
<div class="t" style="left:235.75px;top:273px;font-size:10px;color:#222;letter-spacing:-0.062px;">000003</div>
<div class="t" style="left:284.25px;top:273px;font-size:10px;color:#222;letter-spacing:-0.032px;width:51.75px;overflow:hidden;">2946626938</div>
<div class="t" style="left:344.25px;top:273px;font-size:10px;color:#222;letter-spacing:0.018px;width:80.75px;overflow:hidden;">561540113146053</div>
<div class="a" style="left:436.2px;top:272.01px;width:11px;height:11px;background:#fff;border:1px solid #cecece;"></div>
<div class="t" style="left:460.00px;top:273px;font-size:10px;color:#222;letter-spacing:-0.131px;">2020.01.28</div>
<div class="a" style="left:539.5px;top:272.01px;width:11px;height:11px;background:#fff;border:1px solid #cecece;"></div>
<div class="a" style="left:584px;top:272.01px;width:11px;height:11px;background:#fff;border:1px solid #cecece;"></div>
<div class="t" style="left:607.50px;top:273px;font-size:10px;color:#222;letter-spacing:-0.062px;">2020.01.28</div>
<div class="t" style="left:672.50px;top:273px;font-size:10px;color:#222;letter-spacing:-0.164px;">Przelew zwykły</div>
<div class="t" style="left:807.50px;top:273px;font-size:10px;color:#222;">FZKO/AWE/1</div>
<div class="a" style="left:922.3px;top:272.01px;width:11px;height:11px;background:#fff;border:1px solid #cecece;"></div>
<div class="a" style="left:982.4px;top:272.01px;width:11px;height:11px;background:#fff;border:1px solid #cecece;"></div>
<div class="a" style="left:8.8px;top:272.01px;width:11px;height:11px;background:#fff;border:1px solid #cecece;"></div>
<div class="t" style="left:68.50px;top:292px;font-size:10px;color:#222;letter-spacing:-0.057px;">379,50</div>
<div class="t" style="left:106.25px;top:292px;font-size:10px;color:#222;letter-spacing:-0.484px;">PLN</div>
<div class="t" style="left:149.25px;top:292px;font-size:10px;color:#222;letter-spacing:-0.149px;">VitalGarden</div>
<div class="t" style="left:235.75px;top:292px;font-size:10px;color:#222;letter-spacing:-0.062px;">000003</div>
<div class="t" style="left:284.25px;top:292px;font-size:10px;color:#222;letter-spacing:-0.032px;width:51.75px;overflow:hidden;">2946626938</div>
<div class="t" style="left:344.25px;top:292px;font-size:10px;color:#222;letter-spacing:0.018px;width:80.75px;overflow:hidden;">561540113146053</div>
<div class="a" style="left:436.2px;top:290.88px;width:11px;height:11px;background:#fff;border:1px solid #cecece;"></div>
<div class="t" style="left:460.00px;top:292px;font-size:10px;color:#222;letter-spacing:-0.131px;">2020.01.24</div>
<div class="a" style="left:539.5px;top:290.88px;width:11px;height:11px;background:#fff;border:1px solid #cecece;"></div>
<div class="a" style="left:584px;top:290.88px;width:11px;height:11px;background:#fff;border:1px solid #cecece;"></div>
<div class="t" style="left:607.50px;top:292px;font-size:10px;color:#222;letter-spacing:-0.077px;">2020.01.24 1</div>
<div class="t" style="left:672.50px;top:292px;font-size:10px;color:#222;letter-spacing:-0.164px;">Przelew zwykły</div>
<div class="t" style="left:807.50px;top:292px;font-size:10px;color:#222;">FZKO/2345/12</div>
<div class="a" style="left:922.3px;top:290.88px;width:11px;height:11px;background:#fff;border:1px solid #cecece;"></div>
<div class="a" style="left:982.4px;top:290.88px;width:11px;height:11px;background:#fff;border:1px solid #cecece;"></div>
<div class="a" style="left:8.8px;top:290.88px;width:11px;height:11px;background:#fff;border:1px solid #cecece;"></div>
<div class="a" style="left:2px;top:305px;width:1020px;height:19px;background:#ecf1f6;"></div>
<div class="t" style="left:60.47px;top:310px;font-size:10px;color:#222;letter-spacing:-0.082px;">4 025,00</div>
<div class="t" style="left:106.25px;top:310px;font-size:10px;color:#222;letter-spacing:-0.484px;">PLN</div>
<div class="t" style="left:149.25px;top:310px;font-size:10px;color:#222;letter-spacing:-0.149px;">VitalGarden</div>
<div class="t" style="left:235.75px;top:310px;font-size:10px;color:#222;letter-spacing:-0.062px;">000003</div>
<div class="t" style="left:284.25px;top:310px;font-size:10px;color:#222;letter-spacing:-0.032px;width:51.75px;overflow:hidden;">2946626938</div>
<div class="t" style="left:344.25px;top:310px;font-size:10px;color:#222;letter-spacing:0.018px;width:80.75px;overflow:hidden;">561540113146053</div>
<div class="a" style="left:436.2px;top:309.75px;width:11px;height:11px;background:#fff;border:1px solid #cecece;"></div>
<div class="t" style="left:460.00px;top:310px;font-size:10px;color:#222;letter-spacing:-0.131px;">2020.01.28</div>
<div class="a" style="left:539.5px;top:309.75px;width:11px;height:11px;background:#fff;border:1px solid #cecece;"></div>
<div class="a" style="left:584px;top:309.75px;width:11px;height:11px;background:#fff;border:1px solid #cecece;"></div>
<div class="t" style="left:607.50px;top:310px;font-size:10px;color:#222;letter-spacing:-0.062px;">2020.01.28</div>
<div class="t" style="left:672.50px;top:310px;font-size:10px;color:#222;letter-spacing:-0.164px;">Przelew zwykły</div>
<div class="t" style="left:807.50px;top:310px;font-size:10px;color:#222;">FZKO/AWE/13</div>
<div class="a" style="left:922.3px;top:309.75px;width:11px;height:11px;background:#fff;border:1px solid #cecece;"></div>
<div class="a" style="left:982.4px;top:309.75px;width:11px;height:11px;background:#fff;border:1px solid #cecece;"></div>
<div class="a" style="left:8.8px;top:309.75px;width:11px;height:11px;background:#fff;border:1px solid #cecece;"></div>
<div class="t" style="left:60.47px;top:329px;font-size:10px;color:#222;letter-spacing:-0.082px;">4 830,00</div>
<div class="t" style="left:106.25px;top:329px;font-size:10px;color:#222;letter-spacing:-0.484px;">PLN</div>
<div class="t" style="left:149.60px;top:329px;font-size:10px;color:#222;letter-spacing:-0.678px;word-spacing:0.8px;width:79.20px;overflow:hidden;">BIURO USŁUG INWESTYCYJNYCH</div>
<div class="t" style="left:235.75px;top:329px;font-size:10px;color:#222;letter-spacing:-0.062px;">000010</div>
<div class="t" style="left:284.25px;top:329px;font-size:10px;color:#222;letter-spacing:-0.032px;width:51.75px;overflow:hidden;">7121420377</div>
<div class="t" style="left:344.25px;top:329px;font-size:10px;color:#222;letter-spacing:-0.032px;width:80.75px;overflow:hidden;">757575675675675</div>
<div class="a" style="left:436.2px;top:328.62px;width:11px;height:11px;background:#fff;border:1px solid #cecece;"></div>
<div class="t" style="left:460.00px;top:329px;font-size:10px;color:#222;letter-spacing:-0.131px;">2020.02.13</div>
<div class="a" style="left:539.5px;top:328.62px;width:11px;height:11px;background:#fff;border:1px solid #cecece;"></div>
<div class="a" style="left:584px;top:328.62px;width:11px;height:11px;background:#fff;border:1px solid #cecece;"></div>
<svg class="a" style="left:584px;top:326.62px" width="14" height="13" viewBox="0 0 14 13"><path d="M2.2 6.5L5.6 9.5L11.7 2.7" fill="none" stroke="#18a0e2" stroke-width="2.4"/></svg>
<div class="t" style="left:607.50px;top:329px;font-size:10px;color:#222;letter-spacing:-0.062px;">2020.02.13</div>
<div class="t" style="left:672.50px;top:329px;font-size:10px;color:#222;letter-spacing:-0.164px;">Przelew zwykły</div>
<div class="t" style="left:807.50px;top:329px;font-size:10px;color:#222;">FZKO/AWE/45</div>
<div class="a" style="left:922.3px;top:328.62px;width:11px;height:11px;background:#fff;border:1px solid #cecece;"></div>
<div class="a" style="left:982.4px;top:328.62px;width:11px;height:11px;background:#fff;border:1px solid #cecece;"></div>
<div class="a" style="left:8.8px;top:328.62px;width:11px;height:11px;background:#fff;border:1px solid #cecece;"></div>
<div class="a" style="left:2px;top:343px;width:1020px;height:19px;background:#ecf1f6;"></div>
<div class="t" style="left:60.47px;top:348px;font-size:10px;color:#222;letter-spacing:-0.082px;">1 150,00</div>
<div class="t" style="left:106.25px;top:348px;font-size:10px;color:#222;letter-spacing:-0.484px;">PLN</div>
<div class="t" style="left:149.25px;top:348px;font-size:10px;color:#222;letter-spacing:-0.149px;">VitalGarden</div>
<div class="t" style="left:235.75px;top:348px;font-size:10px;color:#222;letter-spacing:-0.062px;">000003</div>
<div class="t" style="left:284.25px;top:348px;font-size:10px;color:#222;letter-spacing:-0.032px;width:51.75px;overflow:hidden;">2946626938</div>
<div class="t" style="left:344.25px;top:348px;font-size:10px;color:#222;letter-spacing:0.018px;width:80.75px;overflow:hidden;">561540113146053</div>
<div class="a" style="left:436.2px;top:347.49px;width:11px;height:11px;background:#fff;border:1px solid #cecece;"></div>
<div class="t" style="left:460.00px;top:348px;font-size:10px;color:#222;letter-spacing:-0.131px;">2020.01.28</div>
<div class="a" style="left:539.5px;top:347.49px;width:11px;height:11px;background:#fff;border:1px solid #cecece;"></div>
<div class="a" style="left:584px;top:347.49px;width:11px;height:11px;background:#fff;border:1px solid #cecece;"></div>
<div class="t" style="left:607.50px;top:348px;font-size:10px;color:#222;letter-spacing:-0.062px;">2020.01.28</div>
<div class="t" style="left:672.50px;top:348px;font-size:10px;color:#222;letter-spacing:-0.164px;">Przelew zwykły</div>
<div class="t" style="left:807.50px;top:348px;font-size:10px;color:#222;">FZKO/AWE/12</div>
<div class="a" style="left:922.3px;top:347.49px;width:11px;height:11px;background:#fff;border:1px solid #cecece;"></div>
<div class="a" style="left:982.4px;top:347.49px;width:11px;height:11px;background:#fff;border:1px solid #cecece;"></div>
<div class="a" style="left:8.8px;top:347.49px;width:11px;height:11px;background:#fff;border:1px solid #cecece;"></div>
<div class="t" style="left:60.47px;top:367px;font-size:10px;color:#222;letter-spacing:0.012px;">3 132,11</div>
<div class="t" style="left:106.25px;top:367px;font-size:10px;color:#222;letter-spacing:-0.484px;">PLN</div>
<div class="t" style="left:149.60px;top:367px;font-size:10px;color:#222;letter-spacing:-0.678px;word-spacing:0.8px;width:79.20px;overflow:hidden;">BIURO USŁUG INWESTYCYJNYCH</div>
<div class="t" style="left:235.75px;top:367px;font-size:10px;color:#222;letter-spacing:-0.062px;">000010</div>
<div class="t" style="left:284.25px;top:367px;font-size:10px;color:#222;letter-spacing:-0.032px;width:51.75px;overflow:hidden;">7121420377</div>
<div class="t" style="left:344.25px;top:367px;font-size:10px;color:#222;letter-spacing:-0.032px;width:80.75px;overflow:hidden;">757575675675675</div>
<div class="a" style="left:436.2px;top:366.36px;width:11px;height:11px;background:#fff;border:1px solid #cecece;"></div>
<div class="t" style="left:460.00px;top:367px;font-size:10px;color:#222;letter-spacing:-0.131px;">2020.02.13</div>
<div class="a" style="left:539.5px;top:366.36px;width:11px;height:11px;background:#fff;border:1px solid #cecece;"></div>
<div class="a" style="left:584px;top:366.36px;width:11px;height:11px;background:#fff;border:1px solid #cecece;"></div>
<svg class="a" style="left:584px;top:364.36px" width="14" height="13" viewBox="0 0 14 13"><path d="M2.2 6.5L5.6 9.5L11.7 2.7" fill="none" stroke="#18a0e2" stroke-width="2.4"/></svg>
<div class="t" style="left:607.50px;top:367px;font-size:10px;color:#222;letter-spacing:-0.062px;">2020.02.13</div>
<div class="t" style="left:672.50px;top:367px;font-size:10px;color:#222;letter-spacing:-0.164px;">Przelew zwykły</div>
<div class="t" style="left:807.50px;top:367px;font-size:10px;color:#222;">FZKO/AWE/4511</div>
<div class="a" style="left:922.3px;top:366.36px;width:11px;height:11px;background:#fff;border:1px solid #cecece;"></div>
<div class="a" style="left:982.4px;top:366.36px;width:11px;height:11px;background:#fff;border:1px solid #cecece;"></div>
<div class="a" style="left:8.8px;top:366.36px;width:11px;height:11px;background:#fff;border:1px solid #cecece;"></div>
<div class="a" style="left:2px;top:381px;width:1020px;height:19px;background:#ecf1f6;"></div>
<div class="t" style="left:60.47px;top:386px;font-size:10px;color:#222;letter-spacing:-0.082px;">2 617,89</div>
<div class="t" style="left:106.25px;top:386px;font-size:10px;color:#222;letter-spacing:-0.484px;">PLN</div>
<div class="t" style="left:149.60px;top:386px;font-size:10px;color:#222;letter-spacing:-0.678px;word-spacing:0.8px;width:79.20px;overflow:hidden;">BIURO USŁUG INWESTYCYJNYCH</div>
<div class="t" style="left:235.75px;top:386px;font-size:10px;color:#222;letter-spacing:-0.062px;">000010</div>
<div class="t" style="left:284.25px;top:386px;font-size:10px;color:#222;letter-spacing:-0.032px;width:51.75px;overflow:hidden;">7121420377</div>
<div class="t" style="left:344.25px;top:386px;font-size:10px;color:#222;letter-spacing:-0.032px;width:80.75px;overflow:hidden;">757575675675675</div>
<div class="a" style="left:436.2px;top:385.23px;width:11px;height:11px;background:#fff;border:1px solid #cecece;"></div>
<div class="t" style="left:460.00px;top:386px;font-size:10px;color:#222;letter-spacing:-0.131px;">2020.02.13</div>
<div class="a" style="left:539.5px;top:385.23px;width:11px;height:11px;background:#fff;border:1px solid #cecece;"></div>
<div class="a" style="left:584px;top:385.23px;width:11px;height:11px;background:#fff;border:1px solid #cecece;"></div>
<div class="t" style="left:672.50px;top:386px;font-size:10px;color:#222;letter-spacing:-0.113px;">Przelew SplitPayment</div>
<div class="t" style="left:807.50px;top:386px;font-size:10px;color:#222;">FZKO/AWE/4511</div>
<div class="a" style="left:922.3px;top:385.23px;width:11px;height:11px;background:#fff;border:1px solid #cecece;"></div>
<div class="a" style="left:982.4px;top:385.23px;width:11px;height:11px;background:#fff;border:1px solid #cecece;"></div>
<div class="a" style="left:8.8px;top:385.23px;width:11px;height:11px;background:#fff;border:1px solid #cecece;"></div>
<div class="t" style="left:60.47px;top:405px;font-size:10px;color:#222;letter-spacing:-0.082px;">3 910,00</div>
<div class="t" style="left:106.25px;top:405px;font-size:10px;color:#222;letter-spacing:-0.484px;">PLN</div>
<div class="t" style="left:149.25px;top:405px;font-size:10px;color:#222;letter-spacing:-0.726px;word-spacing:1.6px;">ASSECO POLAND</div>
<div class="t" style="left:235.75px;top:405px;font-size:10px;color:#222;letter-spacing:-0.062px;">000078</div>
<div class="t" style="left:284.25px;top:405px;font-size:10px;color:#222;letter-spacing:-0.032px;width:51.75px;overflow:hidden;">5220003782</div>
<div class="t" style="left:344.25px;top:405px;font-size:10px;color:#222;letter-spacing:-0.032px;width:80.75px;overflow:hidden;">182490000558154</div>
<div class="a" style="left:436.2px;top:404.1px;width:11px;height:11px;background:#fff;border:1px solid #cecece;"></div>
<div class="t" style="left:460.00px;top:405px;font-size:10px;color:#222;letter-spacing:-0.131px;">2020.02.13</div>
<div class="a" style="left:539.5px;top:404.1px;width:11px;height:11px;background:#fff;border:1px solid #cecece;"></div>
<div class="a" style="left:584px;top:404.1px;width:11px;height:11px;background:#fff;border:1px solid #cecece;"></div>
<svg class="a" style="left:584px;top:402.1px" width="14" height="13" viewBox="0 0 14 13"><path d="M2.2 6.5L5.6 9.5L11.7 2.7" fill="none" stroke="#18a0e2" stroke-width="2.4"/></svg>
<div class="t" style="left:607.50px;top:405px;font-size:10px;color:#222;letter-spacing:-0.062px;">2020.02.13</div>
<div class="t" style="left:672.50px;top:405px;font-size:10px;color:#222;letter-spacing:-0.164px;">Przelew zwykły</div>
<div class="t" style="left:807.50px;top:405px;font-size:10px;color:#222;">FZKO/2345/13</div>
<div class="a" style="left:922.3px;top:404.1px;width:11px;height:11px;background:#fff;border:1px solid #cecece;"></div>
<div class="a" style="left:982.4px;top:404.1px;width:11px;height:11px;background:#fff;border:1px solid #cecece;"></div>
<div class="a" style="left:8.8px;top:404.1px;width:11px;height:11px;background:#fff;border:1px solid #cecece;"></div>
<div class="a" style="left:2px;top:418px;width:1020px;height:20px;background:#ecf1f6;"></div>
<div class="t" style="left:60.47px;top:424px;font-size:10px;color:#222;letter-spacing:-0.082px;">4 600,00</div>
<div class="t" style="left:106.25px;top:424px;font-size:10px;color:#222;letter-spacing:-0.484px;">PLN</div>
<div class="t" style="left:149.25px;top:424px;font-size:10px;color:#222;letter-spacing:-0.726px;word-spacing:1.6px;">ASSECO POLAND</div>
<div class="t" style="left:235.75px;top:424px;font-size:10px;color:#222;letter-spacing:-0.062px;">000078</div>
<div class="t" style="left:284.25px;top:424px;font-size:10px;color:#222;letter-spacing:-0.032px;width:51.75px;overflow:hidden;">5220003782</div>
<div class="t" style="left:344.25px;top:424px;font-size:10px;color:#222;letter-spacing:-0.032px;width:80.75px;overflow:hidden;">021020102600001</div>
<div class="a" style="left:436.2px;top:422.97px;width:11px;height:11px;background:#fff;border:1px solid #cecece;"></div>
<svg class="a" style="left:436.2px;top:420.97px" width="14" height="13" viewBox="0 0 14 13"><path d="M2.2 6.5L5.6 9.5L11.7 2.7" fill="none" stroke="#18a0e2" stroke-width="2.4"/></svg>
<div class="t" style="left:460.00px;top:424px;font-size:10px;color:#222;letter-spacing:-0.131px;">2020.02.13</div>
<div class="a" style="left:539.5px;top:422.97px;width:11px;height:11px;background:#fff;border:1px solid #cecece;"></div>
<div class="a" style="left:584px;top:422.97px;width:11px;height:11px;background:#fff;border:1px solid #cecece;"></div>
<svg class="a" style="left:584px;top:420.97px" width="14" height="13" viewBox="0 0 14 13"><path d="M2.2 6.5L5.6 9.5L11.7 2.7" fill="none" stroke="#18a0e2" stroke-width="2.4"/></svg>
<div class="t" style="left:607.50px;top:424px;font-size:10px;color:#222;letter-spacing:-0.062px;">2020.02.13</div>
<div class="t" style="left:672.50px;top:424px;font-size:10px;color:#222;letter-spacing:-0.164px;">Przelew zwykły</div>
<div class="t" style="left:807.50px;top:424px;font-size:10px;color:#222;">FZKO/2345/14</div>
<div class="a" style="left:922.3px;top:422.97px;width:11px;height:11px;background:#fff;border:1px solid #cecece;"></div>
<div class="a" style="left:982.4px;top:422.97px;width:11px;height:11px;background:#fff;border:1px solid #cecece;"></div>
<div class="a" style="left:8.8px;top:422.97px;width:11px;height:11px;background:#fff;border:1px solid #cecece;"></div>
<div class="a" style="left:25.0px;top:213px;width:1px;height:225px;background:#d5e3f0;"></div>
<div class="a" style="left:45.0px;top:213px;width:1px;height:225px;background:#d5e3f0;"></div>
<div class="a" style="left:1px;top:211px;width:1022px;height:2px;background:#1b84c9;"></div>
<div class="a" style="left:1px;top:228px;width:1022px;height:2px;background:#1b84c9;"></div>
<div class="a" style="left:46px;top:211px;width:56px;height:19px;border:2px solid #1b7fc4;"></div>
<div class="a" style="left:5px;top:157px;width:174.7px;height:27.8px;border-radius:4px;box-shadow:inset 0 0 2.5px 1.2px rgba(80,80,80,.28);"></div>
<svg class="a" style="left:3px;top:155px" width="178.7" height="31.8" viewBox="0 0 178.7 31.8"><rect x="1.875" y="1.875" width="174.95" height="28.05" rx="4.125" fill="none" stroke="#f41616" stroke-width="1.75"/></svg>
<div class="a" style="left:891.9px;top:177.5px;width:67.2px;height:265px;border-radius:4px;box-shadow:inset 0 0 2.5px 1.2px rgba(80,80,80,.28);"></div>
<svg class="a" style="left:889.9px;top:175.5px" width="71.2" height="269" viewBox="0 0 71.2 269"><rect x="1.875" y="1.875" width="67.45" height="265.25" rx="4.125" fill="none" stroke="#f41616" stroke-width="1.75"/></svg>
<div class="a" style="left:2px;top:456px;width:1020px;height:1px;background:#d0d0d0;"></div>
<svg class="a" style="left:5px;top:459px" width="6" height="8" viewBox="0 0 6 8"><path d="M5 0.8L1 4L5 7.2" fill="none" stroke="#c0c0c0" stroke-width="1"/></svg>
<svg class="a" style="left:1013.5px;top:459px" width="6" height="8" viewBox="0 0 6 8"><path d="M1 0.8L5 4L1 7.2" fill="none" stroke="#c0c0c0" stroke-width="1"/></svg>
<div class="a" style="left:313px;top:460px;width:549.3px;height:5.8px;background:#bebebe;"></div>
<div class="a" style="left:1px;top:469px;width:1022px;height:4px;background:#b6b6b6;"></div>
<div class="a" style="left:1px;top:473px;width:1022px;height:22.5px;background:#ebebeb;"></div>
<div class="a" style="left:507px;top:470.7px;width:3px;height:1.3px;background:#f2f2f2;"></div>
<div class="a" style="left:510.7px;top:470.7px;width:3px;height:1.3px;background:#f2f2f2;"></div>
<div class="a" style="left:514.4px;top:470.7px;width:3px;height:1.3px;background:#f2f2f2;"></div>
<div class="a" style="left:1px;top:495.5px;width:1022px;height:6px;background:#fff;"></div>
<div class="a" style="left:38.5px;top:475.3px;width:102px;height:22px;background:#fff;border-top:2px solid #1c86d1;border-right:1px solid #d4d4d4;"></div>
<div class="a" style="left:140.5px;top:476.5px;width:92px;height:19px;background:#fcfcfc;border-top:1px solid #dcdcdc;border-right:1px solid #d4d4d4;border-radius:0 2px 0 0;"></div>
<div class="a" style="left:232.5px;top:476.5px;width:91px;height:19px;background:#fcfcfc;border-top:1px solid #dcdcdc;border-right:1px solid #d4d4d4;border-radius:0 2px 0 0;"></div>
<div class="a" style="left:323.5px;top:476.5px;width:100px;height:19px;background:#fcfcfc;border-top:1px solid #dcdcdc;border-right:1px solid #d4d4d4;border-radius:0 2px 0 0;"></div>
<div class="t" style="left:48.25px;top:481px;font-size:10px;color:#1b7dc6;letter-spacing:-0.283px;font-weight:bold;-webkit-text-stroke:0.22px;">Historia akceptacji</div>
<div class="t" style="left:150.00px;top:481px;font-size:10px;color:#555;letter-spacing:-0.042px;">Historia w banku</div>
<div class="t" style="left:242.50px;top:481px;font-size:10px;color:#555;letter-spacing:-0.027px;">Historia operacji</div>
<div class="t" style="left:333.25px;top:481px;font-size:10px;color:#555;letter-spacing:-0.221px;">Log z Web Service</div>
<svg class="a" style="left:5px;top:478px" width="16" height="15" viewBox="0 0 16 15"><rect x="1.4" y="1.9" width="1.5" height="7.5" fill="#7fa3d6"/><rect x="1.4" y="8.700" width="13.100" height="1.100" fill="#4a7cc0"/><rect x="1.4" y="9.800" width="5.400" height="3.500" fill="#3b72bd"/><rect x="8.200" y="11.100" width="1.900" height="1.900" fill="#bcbcbc"/><rect x="11.900" y="11.100" width="2.200" height="1.900" fill="#bcbcbc"/><circle cx="9.700" cy="3.400" r="3.050" fill="#fff" stroke="#4a7cc0" stroke-width="1.3"/><path d="M12 5.700L14 7.300" stroke="#4a7cc0" stroke-width="1.600" stroke-linecap="round"/></svg>
<svg class="a" style="left:23.2px;top:481.4px" width="8.6" height="5.6" viewBox="0 0 8.6 5.6"><path d="M1 1L4.3 4.6L7.6 1" fill="none" stroke="#222" stroke-width="1.5"/></svg>
<div class="a" style="left:0px;top:36px;width:1px;height:467px;background:#2a80c2;"></div>
<div class="a" style="left:1023px;top:36px;width:1px;height:467px;background:#1aa6e2;"></div>
<div class="a" style="left:0px;top:501.5px;width:1024px;height:1.5px;background:linear-gradient(90deg,#2a80c2,#07a0e0 56%,#00a3e2);"></div>
</body></html>
